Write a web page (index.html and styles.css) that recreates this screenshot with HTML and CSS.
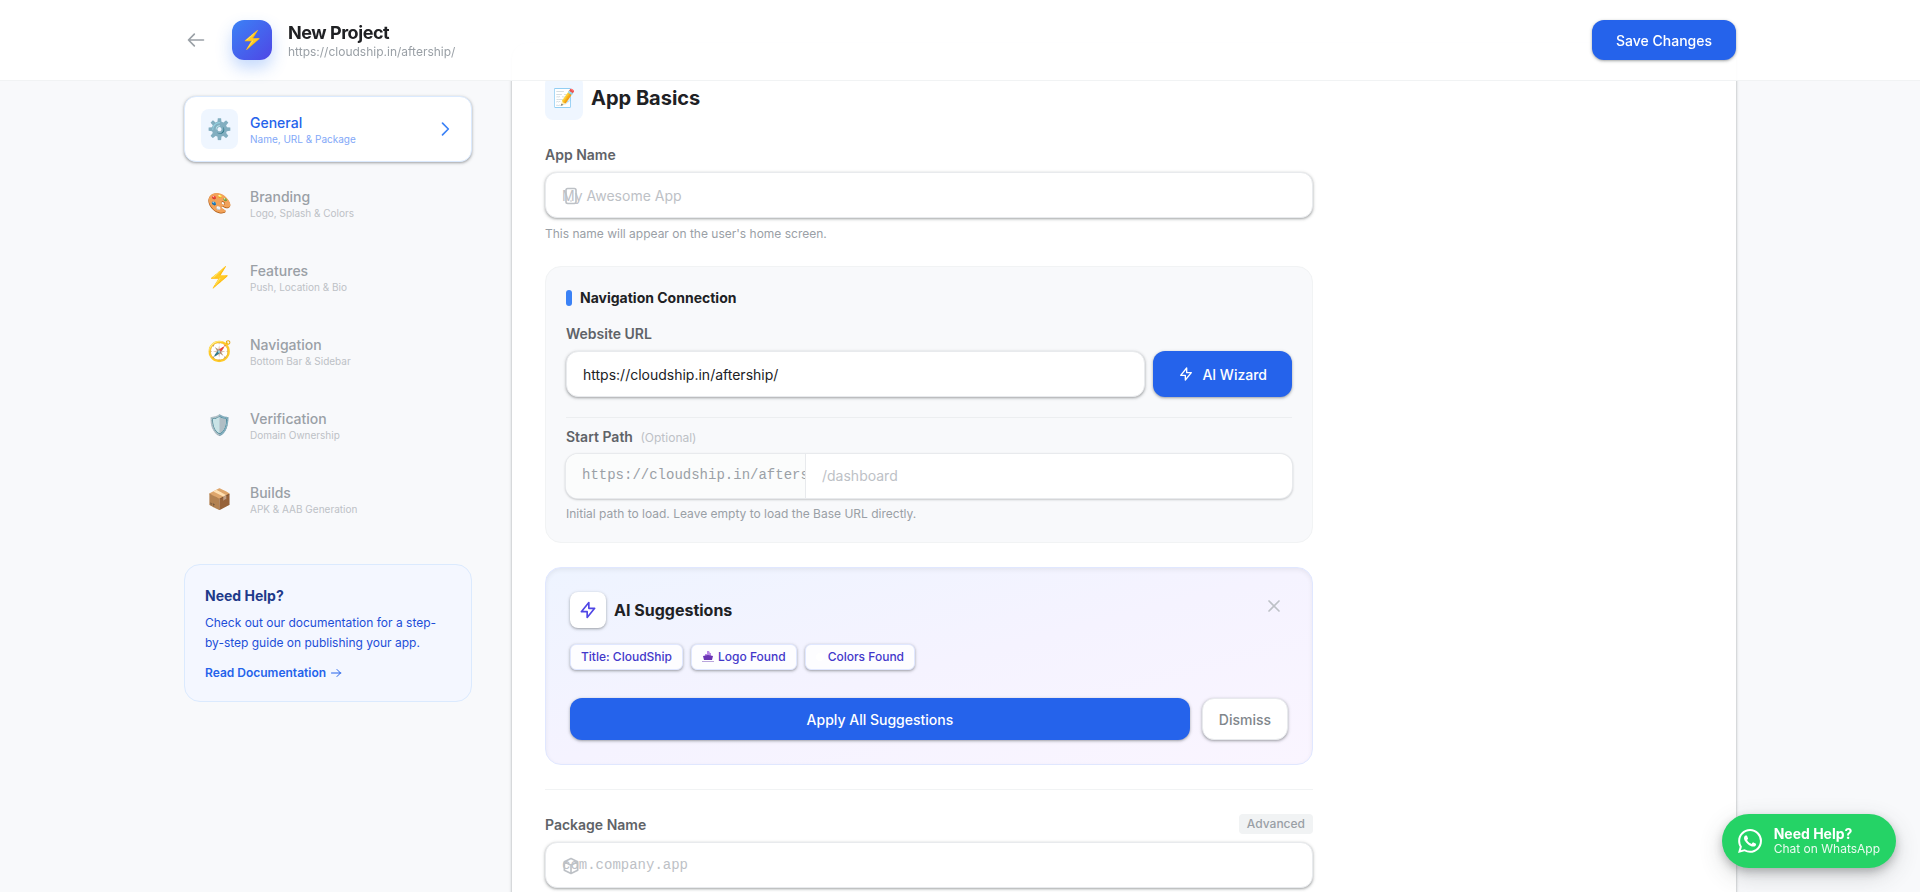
FILE: index.html
```html
<!DOCTYPE html>
<html lang="en">
<head>
    <meta charset="UTF-8">
    <meta name="viewport" content="width=device-width, initial-scale=1.0">
    <title>New Project</title>
    <link rel="stylesheet" href="styles.css">
</head>
<body>
    <header class="topbar">
        <div class="topbar-inner">
            <a href="#" class="back-link" aria-label="Back">
                <svg class="icon-20" viewBox="0 0 24 24"><path d="M10 19l-7-7m0 0l7-7m-7 7h18"/></svg>
            </a>
            <div class="app-logo">⚡</div>
            <div class="project">
                <h1>New Project</h1>
                <p>https://cloudship.in/aftership/</p>
            </div>
            <button type="button" class="btn btn-primary save-btn">Save Changes</button>
        </div>
    </header>

    <div class="layout">
        <aside class="sidebar">
            <nav class="steps">
                <a href="#general" class="step active">
                    <span class="step-icon">⚙️</span>
                    <span class="step-text">
                        <span class="step-title">General</span>
                        <span class="step-desc">Name, URL &amp; Package</span>
                    </span>
                    <svg class="icon-20" viewBox="0 0 24 24"><path d="M9 5l7 7-7 7"/></svg>
                </a>
                <a href="#branding" class="step">
                    <span class="step-icon">🎨</span>
                    <span class="step-text">
                        <span class="step-title">Branding</span>
                        <span class="step-desc">Logo, Splash &amp; Colors</span>
                    </span>
                </a>
                <a href="#features" class="step">
                    <span class="step-icon">⚡</span>
                    <span class="step-text">
                        <span class="step-title">Features</span>
                        <span class="step-desc">Push, Location &amp; Bio</span>
                    </span>
                </a>
                <a href="#navigation" class="step">
                    <span class="step-icon">🧭</span>
                    <span class="step-text">
                        <span class="step-title">Navigation</span>
                        <span class="step-desc">Bottom Bar &amp; Sidebar</span>
                    </span>
                </a>
                <a href="#verification" class="step">
                    <span class="step-icon">🛡️</span>
                    <span class="step-text">
                        <span class="step-title">Verification</span>
                        <span class="step-desc">Domain Ownership</span>
                    </span>
                </a>
                <a href="#builds" class="step">
                    <span class="step-icon">📦</span>
                    <span class="step-text">
                        <span class="step-title">Builds</span>
                        <span class="step-desc">APK &amp; AAB Generation</span>
                    </span>
                </a>
            </nav>

            <div class="help-card">
                <h4>Need Help?</h4>
                <p>Check out our documentation for a step-by-step guide on publishing your app.</p>
                <a href="#docs">Read Documentation
                    <svg class="icon-12" viewBox="0 0 24 24"><path d="M14 5l7 7m0 0l-7 7m7-7H3"/></svg>
                </a>
            </div>
        </aside>

        <main class="card">
            <div class="form" id="general">
                <div class="section-head">
                    <span class="section-icon">📝</span>
                    <h2>App Basics</h2>
                </div>

                <div class="field">
                    <label for="app-name">App Name</label>
                    <div class="input-wrap">
                        <svg class="input-icon" viewBox="0 0 24 24"><path d="M12 18h.01M8 21h8a2 2 0 002-2V5a2 2 0 00-2-2H8a2 2 0 00-2 2v14a2 2 0 002 2z"/></svg>
                        <input type="text" id="app-name" class="input" placeholder="My Awesome App">
                    </div>
                    <p class="hint">This name will appear on the user's home screen.</p>
                </div>

                <section class="connection">
                    <h3>Navigation Connection</h3>
                    <label for="site-url">Website URL</label>
                    <div class="url-row">
                        <input type="text" id="site-url" class="input" value="https://cloudship.in/aftership/">
                        <button type="button" class="btn btn-primary wizard-btn">
                            <svg class="icon-16" viewBox="0 0 24 24"><path d="M13 10V3L4 14h7v7l9-11h-7z"/></svg>
                            AI Wizard
                        </button>
                    </div>
                    <div class="start-path">
                        <label for="start-path">Start Path <span class="optional">(Optional)</span></label>
                        <div class="path-group">
                            <span class="path-prefix">https://cloudship.in/aftership/</span>
                            <input type="text" id="start-path" placeholder="/dashboard">
                        </div>
                        <p class="hint">Initial path to load. Leave empty to load the Base URL directly.</p>
                    </div>
                </section>

                <section class="suggestions">
                    <div class="suggestions-head">
                        <span class="spark">
                            <svg class="icon-20" viewBox="0 0 24 24"><path d="M13 10V3L4 14h7v7l9-11h-7z"/></svg>
                        </span>
                        <h3>AI Suggestions</h3>
                        <button type="button" class="close-btn" aria-label="Close">
                            <svg class="icon-20" viewBox="0 0 24 24"><path d="M6 18L18 6M6 6l12 12"/></svg>
                        </button>
                    </div>
                    <div class="tags">
                        <span class="tag">Title: CloudShip</span>
                        <span class="tag">
                            <svg class="tag-logo" viewBox="0 0 12 12">
                                <path fill="#b98ae6" d="M5 0h2l1 2h1v3H3V3h2z"/>
                                <path fill="#6b35b5" d="M1 5l5-1 5 1-1 4H2z"/>
                                <path fill="#b9a4dc" d="M0 10h12v1H0z"/>
                            </svg>
                            Logo Found
                        </span>
                        <span class="tag"><span class="swatch"></span>Colors Found</span>
                    </div>
                    <div class="suggestions-actions">
                        <button type="button" class="btn btn-primary apply-btn">Apply All Suggestions</button>
                        <button type="button" class="btn btn-plain">Dismiss</button>
                    </div>
                </section>

                <div class="field package">
                    <div class="label-row">
                        <label for="package-name">Package Name</label>
                        <span class="badge">Advanced</span>
                    </div>
                    <div class="input-wrap">
                        <svg class="input-icon" viewBox="0 0 24 24"><path d="M20 7l-8-4-8 4m16 0l-8 4m8-4v10l-8 4m0-10L4 7m8 4v10M4 7v10l8 4"/></svg>
                        <input type="text" id="package-name" class="input mono" placeholder="com.company.app">
                    </div>
                </div>
            </div>
        </main>
    </div>

    <a href="#whatsapp" class="whatsapp">
        <svg viewBox="0 0 24 24"><path d="M17.472 14.382c-.297-.149-1.758-.867-2.03-.967-.273-.099-.471-.148-.67.15-.197.297-.767.966-.94 1.164-.173.199-.347.223-.644.075-.297-.15-1.255-.463-2.39-1.475-.883-.788-1.48-1.761-1.653-2.059-.173-.297-.018-.458.13-.606.134-.133.298-.347.446-.52.149-.174.198-.298.298-.497.099-.198.05-.371-.025-.52-.075-.149-.669-1.612-.916-2.207-.242-.579-.487-.5-.669-.51-.173-.008-.371-.01-.57-.01-.198 0-.52.074-.792.372-.272.297-1.04 1.016-1.04 2.479 0 1.462 1.065 2.875 1.213 3.074.149.198 2.096 3.2 5.077 4.487.709.306 1.262.489 1.694.625.712.227 1.36.195 1.871.118.571-.085 1.758-.719 2.006-1.413.248-.694.248-1.289.173-1.413-.074-.124-.272-.198-.57-.347m-5.421 7.403h-.004a9.87 9.87 0 01-5.031-1.378l-.361-.214-3.741.982.998-3.648-.235-.374a9.86 9.86 0 01-1.51-5.26c.001-5.45 4.436-9.884 9.888-9.884 2.64 0 5.122 1.03 6.988 2.898a9.825 9.825 0 012.893 6.994c-.003 5.45-4.437 9.884-9.885 9.884m8.413-18.297A11.815 11.815 0 0012.05 0C5.495 0 .16 5.335.157 11.892c0 2.096.547 4.142 1.588 5.945L.057 24l6.305-1.654a11.882 11.882 0 005.683 1.448h.005c6.554 0 11.89-5.335 11.893-11.893a11.821 11.821 0 00-3.48-8.413z"/></svg>
        <span class="whatsapp-text">
            <strong>Need Help?</strong>
            <span>Chat on WhatsApp</span>
        </span>
    </a>
</body>
</html>
```
FILE: styles.css
```css
:root {
    --blue: #2563eb;
    --text: #202124;
    --muted: #5f6368;
    --soft: #9aa0a6;
    --faint: #bdc1c6;
    --line: #f1f3f4;
    --shadow: 0 1px 2px 0 rgba(60, 64, 67, 0.3), 0 1px 3px 1px rgba(60, 64, 67, 0.15);
}

* {
    box-sizing: border-box;
    margin: 0;
    padding: 0;
}

body {
    height: 100vh;
    overflow: hidden;
    background: #f8f9fb;
    color: var(--text);
    font-family: Inter, "Liberation Sans", sans-serif;
    font-size: 14px;
    line-height: 20px;
}

a {
    color: inherit;
    text-decoration: none;
}

button,
input {
    font: inherit;
}

svg {
    flex-shrink: 0;
    fill: none;
    stroke: currentColor;
    stroke-width: 2;
    stroke-linecap: round;
    stroke-linejoin: round;
}

.icon-12 { width: 12px; height: 12px; }
.icon-16 { width: 16px; height: 16px; }
.icon-20 { width: 20px; height: 20px; }

/* Buttons */
.btn {
    display: inline-flex;
    align-items: center;
    justify-content: center;
    gap: 8px;
    padding: 0 24px;
    border: 0;
    border-radius: 12px;
    font-weight: 500;
    line-height: 21px;
    cursor: pointer;
    box-shadow: var(--shadow);
}

.btn-primary {
    background: var(--blue);
    color: #fff;
}

.btn-plain {
    padding: 0 16px;
    border: 1px solid #e8eaed;
    background: #fff;
    color: #80868b;
}

/* Header */
.topbar {
    position: fixed;
    top: 0;
    left: 0;
    right: 0;
    z-index: 10;
    background: rgba(255, 255, 255, 0.95);
    border-bottom: 1px solid var(--line);
}

.topbar-inner {
    display: flex;
    align-items: center;
    gap: 16px;
    max-width: 1600px;
    height: 80px;
    margin: 0 auto;
    padding: 0 24px;
}

.back-link {
    display: flex;
    margin-left: -8px;
    padding: 10px;
    color: var(--soft);
}

.app-logo {
    display: flex;
    align-items: center;
    justify-content: center;
    width: 40px;
    height: 40px;
    border-radius: 12px;
    background: linear-gradient(135deg, #3b82f6, #4f46e5);
    box-shadow: 0 8px 16px rgba(59, 130, 246, 0.3);
    font-size: 18px;
}

.project {
    padding-top: 2px;
}

.project h1 {
    font-size: 18px;
    line-height: 22px;
    letter-spacing: -0.025em;
}

.project p {
    color: var(--soft);
    font-size: 12px;
    line-height: 16px;
}

.save-btn {
    height: 40px;
    margin-left: auto;
}

/* Layout */
.layout {
    display: grid;
    grid-template-columns: 288px 1fr;
    gap: 40px;
    max-width: 1600px;
    height: 100%;
    margin: 0 auto;
    padding: 43px 24px 0;
}

.sidebar {
    padding-top: 53px;
}

.steps {
    display: flex;
    flex-direction: column;
    gap: 8px;
}

.step {
    display: flex;
    align-items: center;
    gap: 12px;
    padding: 12px 16px;
    border: 1px solid transparent;
    border-radius: 12px;
    color: var(--soft);
}

.step-icon {
    display: flex;
    justify-content: center;
    width: 37px;
    padding: 6px 0;
    border-radius: 8px;
    font-size: 20px;
    line-height: 28px;
}

.step-text {
    flex: 1;
    padding-top: 2px;
}

.step-title,
.step-desc {
    display: block;
}

.step-title {
    font-weight: 500;
    line-height: 18px;
}

.step-desc {
    color: var(--faint);
    font-size: 10px;
    line-height: 14px;
}

.step.active {
    background: #fff;
    border-color: #dbeafe;
    box-shadow: var(--shadow);
    color: #3b82f6;
}

.step.active .step-icon {
    background: #eff6ff;
}

.step.active .step-title {
    color: var(--blue);
}

.step.active .step-desc {
    color: #82a8f8;
}

.help-card {
    margin-top: 32px;
    padding: 20px;
    border: 1px solid #dbeafe;
    border-radius: 16px;
    background: #f4f7ff;
}

.help-card h4 {
    margin-bottom: 6px;
    color: #1e3a8a;
    font-size: 14px;
    line-height: 22px;
}

.help-card p {
    margin-bottom: 12px;
    color: #1d4ed8;
    font-size: 12px;
}

.help-card a {
    display: flex;
    align-items: center;
    gap: 4px;
    color: var(--blue);
    font-size: 12px;
    font-weight: 600;
    line-height: 16px;
}

/* Main card */
.card {
    min-height: 900px;
    padding: 32px;
    border: 1px solid #fff;
    border-radius: 16px;
    background: #fff;
    box-shadow: var(--shadow);
}

.form {
    display: flex;
    flex-direction: column;
    gap: 24px;
    max-width: 768px;
}

.section-head {
    display: flex;
    align-items: center;
    gap: 8px;
}

.section-icon {
    padding: 8px;
    border-radius: 8px;
    background: #eff6ff;
    font-size: 18px;
    line-height: 28px;
}

.section-head h2 {
    font-size: 20px;
    line-height: 28px;
}

label {
    display: block;
    margin-bottom: 6px;
    color: var(--muted);
    font-weight: 600;
    line-height: 22px;
}

.input-wrap {
    position: relative;
}

.input-icon {
    position: absolute;
    top: 14px;
    left: 16px;
    width: 20px;
    height: 20px;
    color: var(--faint);
}

.input {
    display: block;
    width: 100%;
    height: 46px;
    padding: 0 16px;
    border: 1px solid #e8eaed;
    border-radius: 12px;
    background: #fff;
    box-shadow: var(--shadow);
    color: var(--text);
}

input::placeholder {
    color: var(--faint);
}

.mono,
.path-prefix {
    font-family: "Liberation Mono", monospace;
}

.hint {
    margin-top: 8px;
    color: var(--soft);
    font-size: 12px;
    line-height: 16px;
}

.connection {
    padding: 20px;
    border: 1px solid var(--line);
    border-radius: 16px;
    background: #f8f9fb;
}

.connection h3 {
    display: flex;
    align-items: center;
    gap: 8px;
    margin-bottom: 14px;
    font-size: 14px;
    line-height: 22px;
}

.connection h3::before {
    content: "";
    width: 6px;
    height: 16px;
    border-radius: 3px;
    background: #3b82f6;
}

.url-row {
    display: flex;
    gap: 8px;
}

.url-row .input {
    flex: 1;
}

.wizard-btn {
    padding: 0 25px;
}

.start-path {
    margin-top: 20px;
    padding-top: 8px;
    border-top: 1px solid #eceef0;
}

.optional {
    margin-left: 4px;
    color: var(--faint);
    font-size: 12px;
    font-weight: 400;
    line-height: 12px;
}

.path-group {
    display: flex;
    height: 44px;
    border-radius: 12px;
    background: #fff;
    box-shadow: 0 0 0 1px #e8eaed, 0 1px 2px 1px rgba(60, 64, 67, 0.25);
    overflow: hidden;
}

.path-prefix {
    width: 240px;
    padding: 11px 0 0 16px;
    border-right: 1px solid #e8eaed;
    background: #fbfcfc;
    color: var(--soft);
    overflow: hidden;
    white-space: nowrap;
}

.path-group input {
    flex: 1;
    padding: 0 16px;
    border: 0;
    background: none;
    outline: none;
}

/* AI suggestions */
.suggestions {
    padding: 24px;
    border: 1px solid #e0e7ff;
    border-radius: 16px;
    background: linear-gradient(to bottom right, #eef4ff, #f5f3ff 50%, #faf5ff);
    box-shadow: inset 0 2px 4px rgba(60, 64, 67, 0.08);
}

.suggestions-head {
    display: flex;
    align-items: center;
    gap: 8px;
    margin-bottom: 16px;
}

.spark {
    display: flex;
    padding: 8px;
    border-radius: 8px;
    background: #fff;
    box-shadow: var(--shadow);
    color: #4f46e5;
}

.suggestions-head h3 {
    font-size: 16px;
    line-height: 24px;
}

.close-btn {
    display: flex;
    align-self: flex-start;
    margin-left: auto;
    padding: 4px;
    border: 0;
    background: none;
    color: var(--faint);
    cursor: pointer;
}

.tags {
    display: flex;
    gap: 8px;
    margin-bottom: 28px;
}

.tag {
    display: flex;
    align-items: center;
    gap: 4px;
    padding: 4px 10px;
    border: 1px solid #e0e7ff;
    border-radius: 6px;
    background: #fdfdff;
    box-shadow: var(--shadow);
    color: #4338ca;
    font-size: 12px;
    font-weight: 500;
    line-height: 16px;
}

.tag-logo {
    width: 12px;
    height: 12px;
    stroke: none;
}

.swatch {
    width: 8px;
    height: 8px;
    border-radius: 50%;
    background: #fff;
}

.suggestions-actions {
    display: flex;
    gap: 12px;
}

.suggestions-actions .btn {
    height: 42px;
}

.apply-btn {
    flex: 1;
}

.package {
    padding-top: 24px;
    border-top: 1px solid var(--line);
}

.label-row {
    display: flex;
    align-items: flex-start;
    justify-content: space-between;
}

.badge {
    padding: 2px 8px;
    border-radius: 4px;
    background: var(--line);
    color: var(--soft);
    font-size: 12px;
    font-weight: 500;
    line-height: 16px;
}

/* WhatsApp button */
.whatsapp {
    position: fixed;
    right: 24px;
    bottom: 24px;
    z-index: 20;
    display: flex;
    align-items: center;
    gap: 12px;
    padding: 12px 16px;
    border-radius: 999px;
    background: #25d366;
    box-shadow: 0 4px 8px rgba(60, 64, 67, 0.3), 0 8px 24px rgba(60, 64, 67, 0.2);
    color: #fff;
}

.whatsapp svg {
    width: 24px;
    height: 24px;
    fill: currentColor;
    stroke: none;
}

.whatsapp-text strong,
.whatsapp-text span {
    display: block;
}

.whatsapp-text strong {
    line-height: 16px;
}

.whatsapp-text span {
    font-size: 12px;
    line-height: 14px;
    opacity: 0.9;
}
```
